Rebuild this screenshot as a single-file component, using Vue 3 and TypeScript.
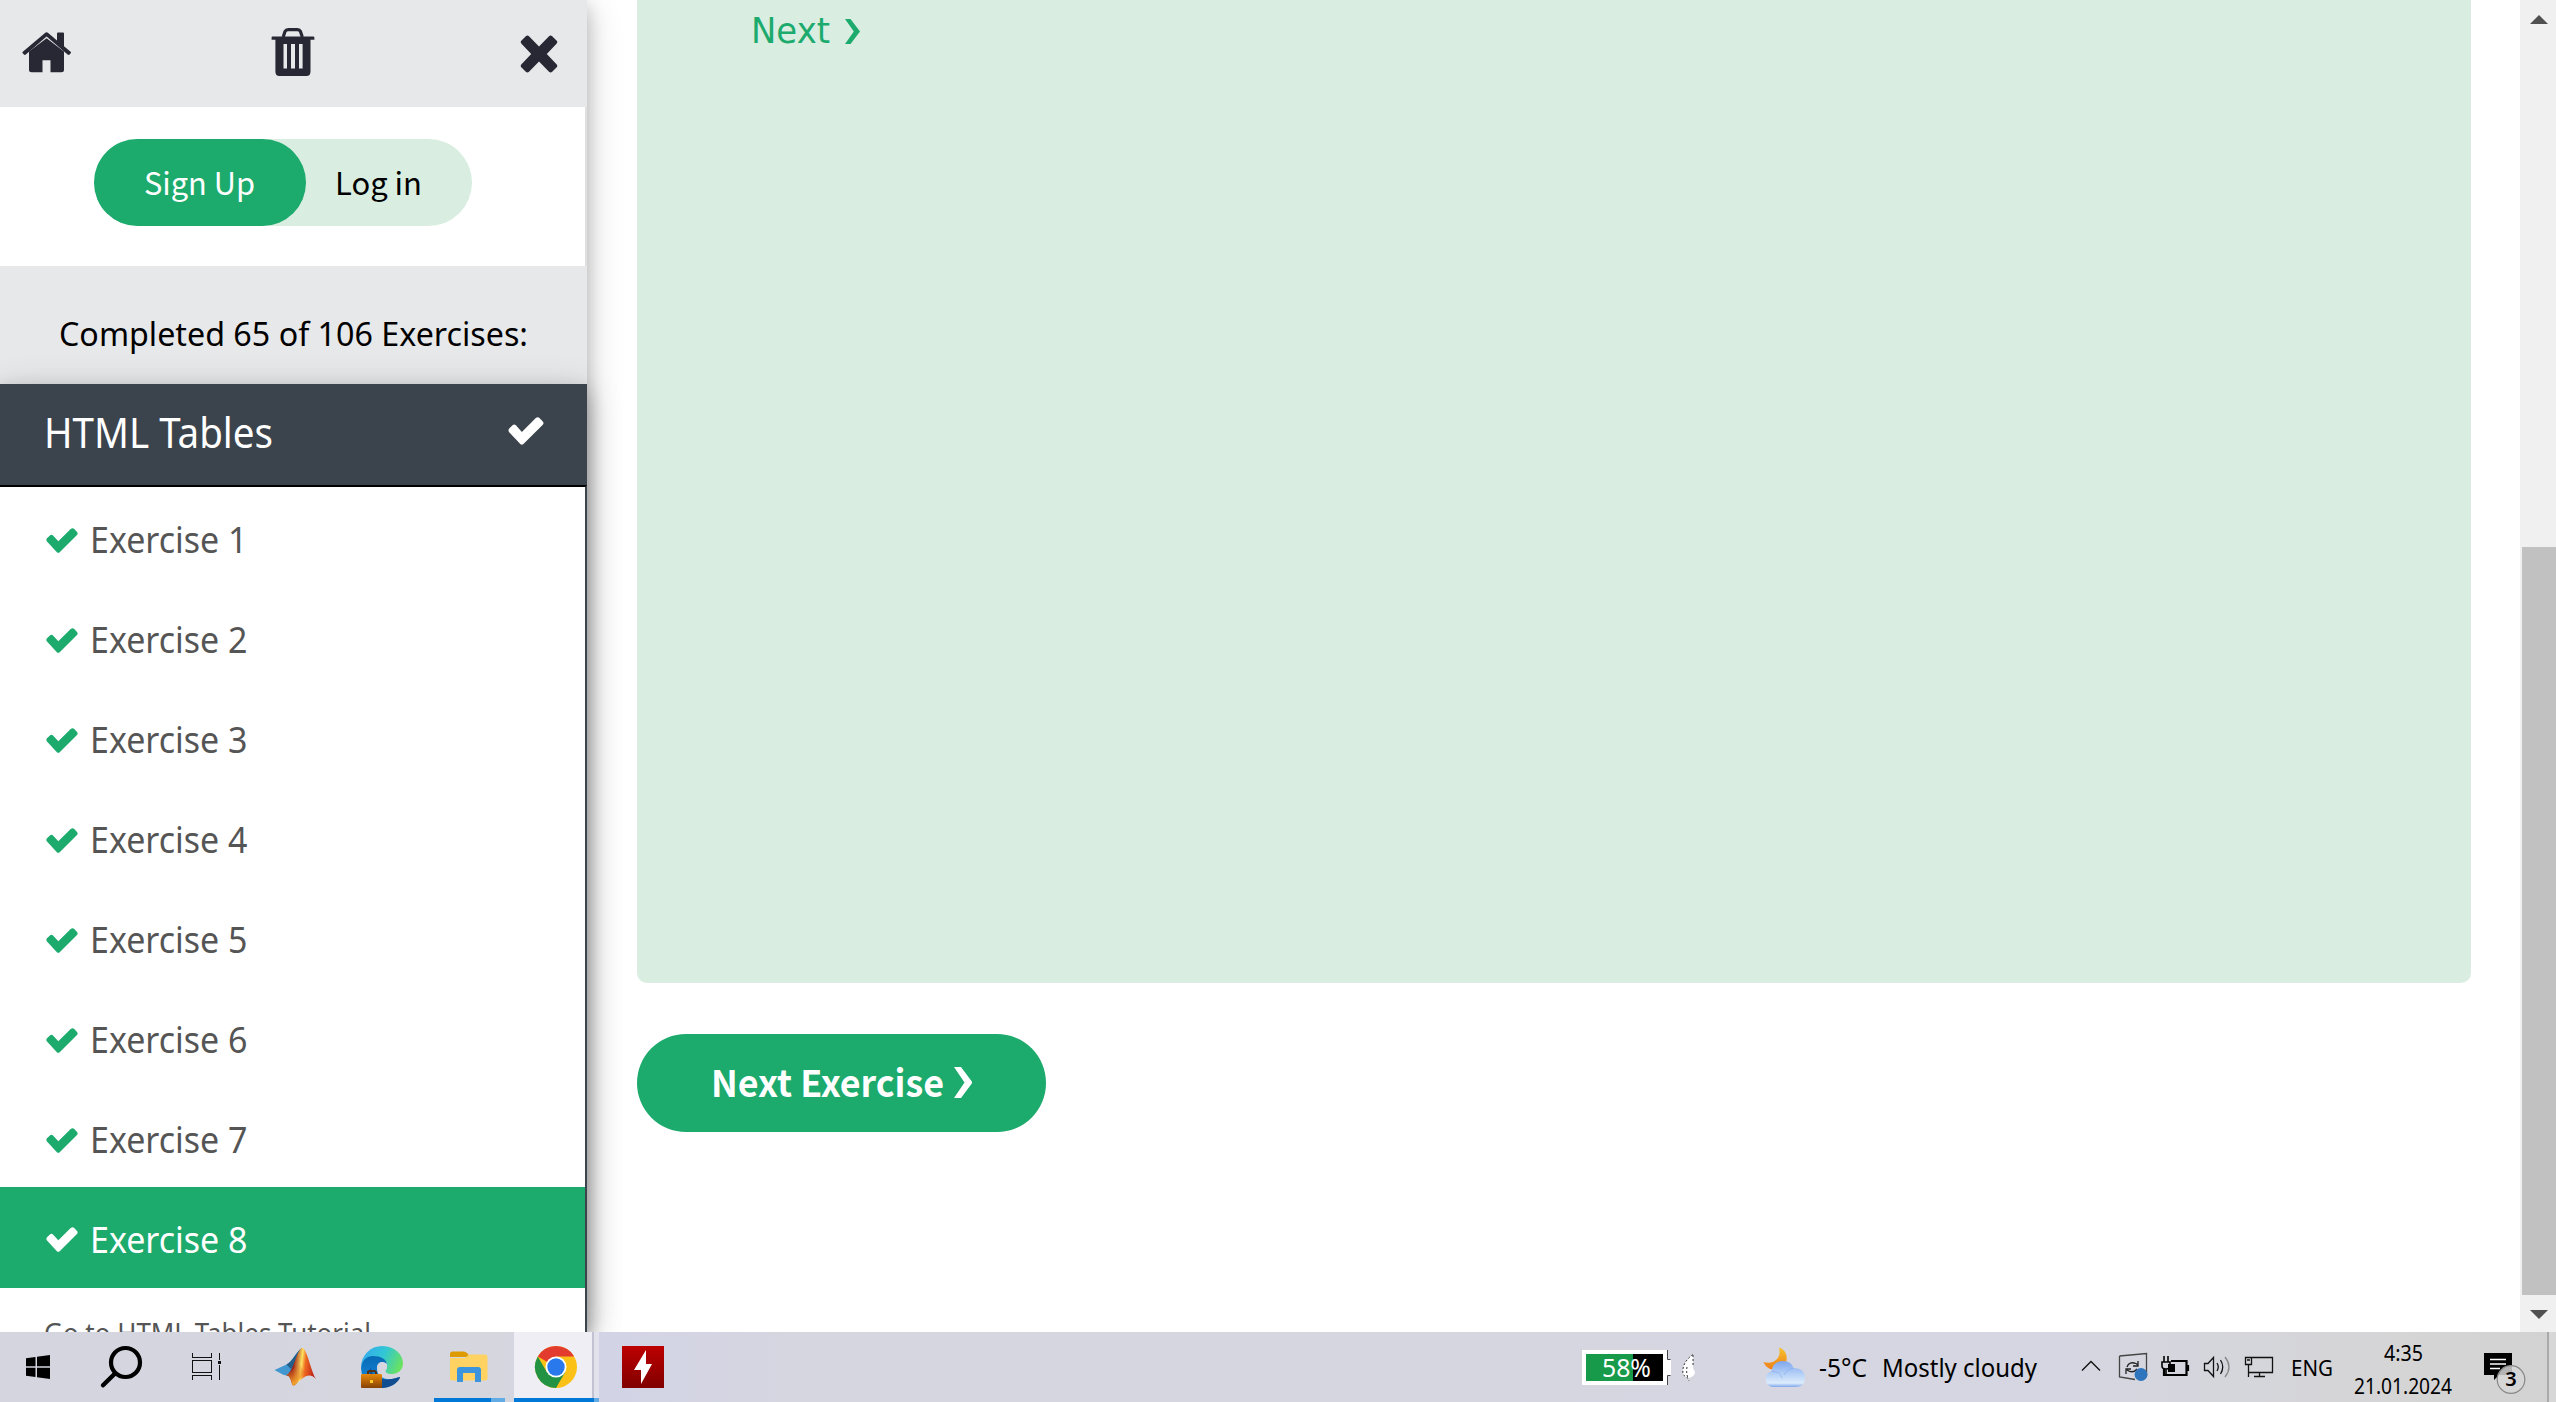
<script setup lang="ts">
import { h, type FunctionalComponent } from 'vue'

interface LabelProps {
  text: string
  size: number
  width: number
  height: number
  base: number
  weight?: number
  font?: string
}

const ui = "'Noto Sans', 'Open Sans', sans-serif"
const source = "'Noto Sans CJK SC', 'Noto Sans', sans-serif"
const dejavu = "'DejaVu Sans', sans-serif"

// One line of text fitted to a fixed advance width.
const Label: FunctionalComponent<LabelProps> = (p) =>
  h('svg', { width: p.width, height: p.height, style: 'display:block;overflow:visible;flex:none' }, [
    h(
      'text',
      {
        x: 0,
        y: p.base,
        fill: 'currentColor',
        'font-size': p.size,
        'font-weight': p.weight ?? 400,
        'font-family': p.font ?? ui,
        textLength: p.width,
        lengthAdjust: 'spacingAndGlyphs',
      },
      p.text,
    ),
  ])
Label.props = ['text', 'size', 'width', 'height', 'base', 'weight', 'font']

const exercises: number[] = [1, 2, 3, 4, 5, 6, 7, 8]
const current = 8
</script>

<template>
  <div class="screen">
    <div class="page">
      <aside class="sidebar">
        <header class="tools">
          <svg class="home" width="50" height="50" viewBox="0 0 50 50">
            <path d="M0.8 21.5 23 1Q24.600 -.4 26.200 1L35 9.200V1.500Q35 .5 36 .5H41Q42 .5 42 1.500V15.500L48.600 21.500Q49.400 22.400 48.700 23.200L47.600 24.500Q46.600 25.300 45.600 24.500L24.600 5 3.800 24.500Q2.800 25.300 1.900 24.500L.8 23.200Q0 22.400 .8 21.500Z" transform="scale(1 .92)" />
            <path d="M24.600 7.500 42 23.800V46.500Q42 49 39.500 49H28.500V34.500H20.500V49H9.500Q7 49 7 46.500V23.800Z" transform="scale(1 .82)" />
          </svg>
          <svg class="trash" width="44" height="50" viewBox="0 0 44 50">
            <path d="M12.200 9 14 3.500Q15 1.600 17.200 1.600H26.500Q28.600 1.600 29.500 3.500L31.300 9" fill="none" stroke="#282834" stroke-width="3.200" />
            <path fill-rule="evenodd" d="M1.300 8.500H42.200Q43.400 8.500 43.400 9.700V11.800H39.500V43.500Q39.500 48 35.400 48H8.500Q4.400 48 4.400 43.500V11.800H.6V9.700Q.6 8.500 1.300 8.500ZM12.500 16V40.500H16V16ZM20 16V40.500H24V16ZM28 16V40.500H31.600V16Z" />
          </svg>
          <svg class="close" width="38" height="38" viewBox="0 0 38 38">
            <path d="M5.800 1.200Q7.400 -.2 9 1.200L19 11.500 29 1.200Q30.600 -.2 32.200 1.200L36.500 5.500Q38.100 7.100 36.500 8.700L26.800 19 36.500 29.300Q38.100 30.900 36.500 32.500L32.200 36.800Q30.600 38.200 29 36.800L19 26.500 9 36.800Q7.400 38.200 5.800 36.800L1.500 32.500Q-.1 30.900 1.500 29.300L11.200 19 1.500 8.700Q-.1 7.100 1.500 5.500Z" />
          </svg>
        </header>

        <section class="auth">
          <div class="pill">
            <div class="signup"><Label text="Sign Up" :size="31.500" :width="111" :height="87" :base="56" :font="source" /></div>
            <div class="login"><Label text="Log in" :size="31.500" :width="87" :height="87" :base="56" :font="source" /></div>
          </div>
        </section>

        <section class="progress">
          <Label text="Completed 65 of 106 Exercises:" :size="33" :width="469" :height="118" :base="80" />
        </section>

        <div class="menu">
          <div class="chapter">
            <Label text="HTML Tables" :size="42" :width="229" :height="101" :base="64" />
            <svg width="36" height="28" viewBox="0 0 32 25"><path d="M1 10.200 4.200 7.200Q5.600 6.300 7 7.400L12.300 13.300 24.700 1Q26.500 -.4 28 .8L31 4Q32.300 5.600 31 7L13.700 24.200Q12.300 25.500 10.900 24.200L1 13.600Q-.3 11.900 1 10.200Z" /></svg>
          </div>

          <nav class="list">
            <a v-for="n in exercises" :key="n" class="item" :class="{ current: n === current }">
              <svg width="32" height="25" viewBox="0 0 32 25"><path d="M1 10.200 4.200 7.200Q5.600 6.300 7 7.400L12.300 13.300 24.700 1Q26.500 -.4 28 .8L31 4Q32.300 5.600 31 7L13.700 24.200Q12.300 25.500 10.900 24.200L1 13.600Q-.3 11.900 1 10.200Z" /></svg>
              <Label :text="'Exercise ' + n" :size="36" :width="157.500" :height="100" :base="65.500" />
            </a>
            <div class="tutorial"><Label text="Go to HTML Tables Tutorial" :size="28" :width="327" :height="44" :base="55" /></div>
          </nav>
        </div>
      </aside>

      <main class="content">
        <div class="panel">
          <Label text="Next" :size="35" :width="79" :height="60" :base="43" :font="dejavu" />
          <svg class="chevron" width="15" height="25" viewBox="0 0 15 25"><path d="M0 0H5.500L15 12.500 5.500 25H0L8.800 12.500Z" /></svg>
        </div>
        <a class="next">
          <Label text="Next Exercise" :size="37" :width="233" :height="98" :base="63" :weight="700" :font="source" />
          <svg class="chevron" width="18" height="31" viewBox="0 0 18 31"><path d="M0 0H7L18.500 15.500 7 31H0L10.500 15.500Z" /></svg>
        </a>
      </main>

      <div class="scrollbar">
        <svg width="18" height="9" viewBox="0 0 18 9"><path d="M0 9 9 0 18 9Z" fill="#505050" /></svg>
        <div class="thumb"></div>
        <svg width="18" height="9" viewBox="0 0 18 9"><path d="M0 0H18L9 9Z" fill="#505050" /></svg>
      </div>
    </div>

    <footer class="taskbar">
      <div class="apps">
        <svg width="76" height="70" viewBox="0 1332 76 70">
          <path d="M26 1358.300 35.500 1357V1366.300H26ZM37 1356.800 50 1355V1366.300H37ZM26 1367.700H35.500V1377L26 1375.700ZM37 1367.700H50V1379L37 1377.200Z" />
        </svg>
        <svg width="88" height="70" viewBox="76 1332 88 70">
          <circle cx="125.500" cy="1362.500" r="14.500" fill="none" stroke="#000" stroke-width="4.200" />
          <path d="M115 1373.500 103 1385.300" stroke="#000" stroke-width="4.400" stroke-linecap="round" />
        </svg>
        <svg width="88" height="70" viewBox="164 1332 88 70" fill="none" stroke="#111" stroke-width="1.200" shape-rendering="crispEdges">
          <path d="M192.500 1353V1357.500H211.500V1353M192.500 1360.500H211.500V1372.500H192.500ZM192.500 1380V1375.500H211.500V1380M219.500 1353V1360M219.500 1365V1380" />
          <rect x="218" y="1361" width="3" height="3" fill="#111" stroke="none" />
        </svg>
        <svg width="88" height="70" viewBox="252 1332 88 70">
          <defs>
            <linearGradient id="mlab" x1="0" x2="1" y1=".1" y2=".25"><stop offset="0" stop-color="#4a1520" /><stop offset=".3" stop-color="#a02818" /><stop offset=".55" stop-color="#ffe060" /><stop offset=".68" stop-color="#ee6a20" /><stop offset="1" stop-color="#bd2018" /></linearGradient>
            <linearGradient id="mlow" y1="0" y2="1" x1="0" x2="0"><stop offset="0" stop-color="#d04a18" stop-opacity="0" /><stop offset="1" stop-color="#ffb52c" /></linearGradient>
          </defs>
          <path d="M274.500 1370 286.500 1364.500C292 1362 296 1352 301 1349L294 1369 286 1375.500C282 1375 279 1372 274.500 1370Z" fill="#4397d1" />
          <path d="M286.500 1364.500C293 1361.500 297 1350.500 302 1348L297 1363 291 1369Z" fill="#245f8c" />
          <path d="M286 1375.500C294 1372 296.500 1348.500 302.500 1348C307 1348.500 311 1372 316 1379C309 1371 302 1378 296 1384.500Q293 1387 292 1384C290.500 1378 289 1375 286 1375.500Z" fill="url(#mlab)" />
          <path d="M286 1375.500C292 1371 295 1367 299 1363L305 1374C300 1377 298 1382 293 1386C291 1380 289 1374 286 1375.500Z" fill="url(#mlow)" />
        </svg>
        <svg width="88" height="70" viewBox="340 1332 88 70">
          <defs>
            <linearGradient id="edgeTop" x1="0" x2="1" y1=".3" y2=".6"><stop offset="0" stop-color="#35abed" /><stop offset=".5" stop-color="#31c6d5" /><stop offset="1" stop-color="#6be35c" /></linearGradient>
            <linearGradient id="edgeLeft" x1="0" x2="0" y1="0" y2="1"><stop offset="0" stop-color="#0869b4" /><stop offset="1" stop-color="#168fe3" /></linearGradient>
            <linearGradient id="bag" x1="0" x2="0" y1="0" y2="1"><stop offset="0" stop-color="#e68a0c" /><stop offset=".5" stop-color="#b86506" /><stop offset="1" stop-color="#854307" /></linearGradient>
          </defs>
          <path d="M361 1367A21 21 0 0 1 382 1346C395 1346 403 1355 403 1363C403 1370 398 1374 392 1374C387 1374 384 1372 386.500 1369C390 1361 380 1356 374 1357C367 1358 363 1362 361 1367Z" fill="url(#edgeTop)" />
          <path d="M361 1368C362 1360 367 1356 373 1356C381 1356 386 1359 387 1364C383 1360 377 1363 377 1369C377 1378 388 1382 399 1377C391 1390 372 1392 364 1379Q361 1374 361 1368Z" fill="url(#edgeLeft)" />
          <path d="M371 1367C370 1377 383 1383 399.500 1377Q400.500 1377 400 1378C394 1388 382 1390 376 1386C370 1382 368 1373 371 1367Z" fill="#114d91" />
          <circle cx="382" cy="1367" r="5" fill="#d5d6e0" />
          <path d="M368 1374V1372Q368 1371 370 1371H374Q376 1371 376 1373V1374" fill="none" stroke="#553019" stroke-width="2" />
          <rect x="361" y="1374" width="21" height="14" rx="1" fill="url(#bag)" />
          <rect x="370" y="1380" width="3" height="3" fill="#ffce25" />
        </svg>
        <svg width="88" height="70" viewBox="428 1332 88 70">
          <path d="M450 1354Q450 1351.500 452 1351.500H464Q466 1351.500 468 1354L470 1357H450Z" fill="#dd9b00" />
          <path d="M450 1358H465L469 1354.500H485.500Q487.500 1354.500 487.500 1357V1378Q487.500 1380.500 485 1380.500H452.500Q450 1380.500 450 1378Z" fill="#ffd262" />
          <path d="M457 1382V1370Q457 1367 460 1367H478Q481 1367 481 1370V1382H475V1373H463V1382Z" fill="#3c95dc" />
          <path d="M434 1398H491V1402H434Z" fill="#0078d7" /><path d="M491 1398H505V1402H491Z" fill="#62abe4" />
        </svg>
        <svg width="84" height="70" viewBox="516 1332 84 70" overflow="visible">
          <path d="M514 1332H592V1402H514Z" fill="#eeeef4" /><path d="M592 1332H594V1402H592Z" fill="#c1c2d2" /><path d="M594 1332H599V1402H594Z" fill="#e2e2ec" />
          <path d="M514 1398H594V1402H514Z" fill="#0078d7" /><path d="M594 1398H599V1402H594Z" fill="#62abe4" />
          <circle cx="556" cy="1367" r="21" fill="#fbc116" />
          <path d="M556 1367 537.800 1356.500A21 21 0 0 1 574.200 1356.500H556Z" fill="#e33b2e" />
          <path d="M537.800 1356.500A21 21 0 0 0 556 1388L565.100 1372.200 556 1367 546.900 1372.200Z" fill="#229342" />
          <circle cx="556" cy="1367" r="10.500" fill="#fff" /><circle cx="556" cy="1367" r="8.700" fill="#2979ec" />
        </svg>
        <svg width="90" height="70" viewBox="600 1332 90 70">
          <defs><linearGradient id="flash" x1="0" x2="0" y1="0" y2="1"><stop offset="0" stop-color="#bd0000" /><stop offset="1" stop-color="#800000" /></linearGradient></defs>
          <rect x="622" y="1346" width="42" height="42" fill="url(#flash)" />
          <path d="M646 1350V1364H652L641 1384V1370H634Z" fill="#fff" />
        </svg>
      </div>

      <div class="tray">
        <div class="battery">
          <div class="charge"><Label text="58%" :size="25" :width="49" :height="28" :base="22.500" /></div>
          <svg width="7" height="35" viewBox="0 0 7 35"><path d="M0 0V35H1V25H4V10H1V0Z" fill="#fff" /><path d="M.5 0V9.500H3.500M.5 35V25.500H3.500" fill="none" stroke="#444" /></svg>
          <svg class="leaf" width="14" height="28" viewBox="0 0 14 28"><path d="M11 .5C3 6 0 13 1 20Q3 23 6 24L7 27V24Q13 22 13 18L11 14Z" fill="#fff" /><path d="M11 .5C3 6 0 13 1 20Q3 23 6 24L7 27M5 13Q4 19 6 24M11 1V12" fill="none" stroke="#333" stroke-dasharray="2 2" /></svg>
        </div>
        <div class="weather">
          <svg width="42" height="41" viewBox="0 0 42 41">
            <defs>
              <linearGradient id="moon" x1="0" x2="0" y1="0" y2="1"><stop offset="0" stop-color="#f5c32c" /><stop offset="1" stop-color="#ef7d17" /></linearGradient>
              <linearGradient id="cloud" x1="0" x2="0" y1="0" y2="1"><stop offset="0" stop-color="#7fa6ee" /><stop offset=".5" stop-color="#b5d0f7" /><stop offset=".85" stop-color="#dcecfb" /><stop offset="1" stop-color="#7fa6ee" /></linearGradient>
            </defs>
            <path d="M16 .5C24 3 26 12 21 19C15 25 4 24 .5 15C10 18 19 12 16 .5Z" fill="url(#moon)" />
            <path d="M9 40A8 8 0 0 1 8.500 24.500Q10 14 20 14Q28 14 30.500 21Q42 21 42 31Q42 40 32 40Z" fill="url(#cloud)" />
            <path d="M8.500 24.500Q17 24 19 31M30.500 21Q24 22 21 28" fill="none" stroke="#84aaee" opacity=".6" />
          </svg>
          <Label text="-5°C" :size="25" :width="48" :height="70" :base="45" />
          <Label text="Mostly cloudy" :size="25" :width="155" :height="70" :base="45" />
        </div>
        <svg width="204" height="70" viewBox="2076 1332 204 70" fill="none" stroke="#111" stroke-width="1.300">
          <path d="M2082 1370.500 2091 1361.500 2100 1370.500" />
          <path d="M2119.500 1356 2146.500 1353.500V1376M2119.500 1356V1377L2135 1379.500" stroke="#444" />
          <path d="M2127 1367Q2129 1361 2136 1363.500L2138 1365M2138 1361V1366H2133M2137 1369Q2133 1374 2127 1370M2126 1374V1369H2131" stroke="#222" />
          <circle cx="2141" cy="1374.500" r="6.500" fill="#2e75be" stroke="none" />
          <path d="M2171 1361H2186.500V1375H2164V1369M2188 1365V1371" stroke="#000" stroke-width="2.200" />
          <path d="M2162 1362H2170V1366Q2170 1369 2166 1369Q2162 1369 2162 1366ZM2164 1356V1362M2168 1356V1362M2166 1369V1376" stroke="#000" stroke-width="1.600" />
          <rect x="2168" y="1364" width="7" height="8" fill="#000" stroke="none" />
          <path d="M2204.500 1363.500H2208L2213.500 1357.500V1376.500L2208 1370.500H2204.500ZM2217 1363Q2219.500 1367 2217 1371M2220.500 1360Q2225 1367 2220.500 1374" />
          <path d="M2225 1357Q2233 1367 2225 1377" stroke="#888" />
          <path d="M2251 1357.500H2272.500V1372.500H2248.500M2245.500 1357.500H2251.500V1364.500H2245.500ZM2248.500 1364.500V1377M2259.500 1372.500V1376.500M2254 1376.500H2265M2247 1360H2250" />
        </svg>
        <div class="lang"><Label text="ENG" :size="21.500" :width="42" :height="70" :base="44" /></div>
        <div class="clock">
          <Label text="4:35" :size="21.500" :width="39" :height="33" :base="27" />
          <Label text="21.01.2024" :size="21.500" :width="98" :height="33" :base="27" />
        </div>
        <svg width="71" height="70" viewBox="2476 1332 71 70">
          <path d="M2484 1353H2512V1375H2499L2494 1380V1375H2484Z" fill="#000" />
          <path d="M2490 1359.500H2506M2490 1364H2506M2490 1368.500H2500" stroke="#fff" stroke-width="1.300" />
          <circle cx="2511" cy="1379.500" r="13.800" fill="#d7d7d8" fill-opacity=".84" stroke="#888" stroke-width="1.200" />
          <text x="2511" y="1386" text-anchor="middle" font-family="Noto Sans, sans-serif" font-size="20" font-weight="600">3</text>
        </svg>
        <div class="peek"></div>
      </div>
    </footer>
  </div>
</template>

<style>
body { margin: 0; overflow: hidden; }
</style>

<style scoped>
.screen { width: 2556px; height: 1402px; display: flex; flex-direction: column; overflow: hidden; background: #fff; color: #000; }
.page { height: 1332px; display: flex; overflow: hidden; }
svg { display: block; flex: none; }
.sidebar { width: 587px; flex: none; height: 1332px; background: #e0e0e1; box-shadow: 0 7px 17px rgba(0,0,0,.2), 0 7px 34px rgba(0,0,0,.19); display: flex; flex-direction: column; }
.tools { height: 107px; flex: none; background: #e7e8ea; display: flex; align-items: flex-start; justify-content: space-between; box-sizing: border-box; padding: 28px 29px 0 22px; fill: #282834; }
.home { margin-top: 4px; }
.trash { margin-right: 7px; }
.close { margin-top: 7px; }
.auth { width: 585px; height: 159px; flex: none; background: #fff; box-sizing: border-box; padding: 32px 0 0 94px; }
.pill { width: 378px; height: 87px; border-radius: 43.5px; background: #d9eee1; display: flex; }
.signup { width: 212px; box-sizing: border-box; padding-left: 50px; border-radius: 43.5px; background: #1caa6d; color: #fff; }
.login { padding-left: 29px; }
.progress { height: 118px; flex: none; background: #e7e8ea; padding-left: 59px; }
.menu { flex: 1; display: flex; flex-direction: column; box-shadow: 0 7px 17px rgba(0,0,0,.2), 0 7px 34px rgba(0,0,0,.19); }
.chapter { height: 101px; flex: none; background: #3b444c; color: #fff; fill: #fff; display: flex; justify-content: space-between; padding: 0 43px 0 43.5px; }
.chapter svg:last-child { margin-top: 33px; }
.list { flex: 1; background: #fff; border-top: 2px solid #000; border-right: 2px solid #3b444c; overflow: hidden; }
.item { height: 100px; display: flex; align-items: center; gap: 12px; padding-left: 46px; color: #555; fill: #1caa6d; }
.item svg:first-child { margin-top: 6px; }
.item.current { height: 101px; align-items: flex-start; background: #1caa6d; color: #fff; fill: #fff; }
.item.current svg:first-child { margin-top: 40px; }
.tutorial { height: 44px; padding-left: 43.5px; color: #555; }
.content { flex: 1; padding-left: 50px; }
.panel { width: 1834px; height: 983px; box-sizing: border-box; border-radius: 0 0 10px 10px; background: #d9eee1; color: #1caa6d; fill: #1caa6d; display: flex; padding-left: 114px; }
.panel .chevron { margin: 19px 0 0 14.5px; }
.next { width: 409px; height: 98px; box-sizing: border-box; margin-top: 51px; padding-left: 74px; border-radius: 49px; background: #1caa6d; color: #fff; fill: #fff; display: flex; }
.next .chevron { margin: 33px 0 0 10px; }
.scrollbar { width: 36px; flex: none; box-sizing: border-box; background: #f0f0f0; padding: 15px 0 13px; display: flex; flex-direction: column; align-items: center; }
.scrollbar svg { margin-left: 2px; }
.thumb { align-self: flex-end; width: 34px; height: 748px; margin: 523px 0 15px; background: #c1c1c1; }
.taskbar { height: 70px; display: flex; justify-content: space-between; background: linear-gradient(90deg, #d4d5df 0, #d6d6df 500px, #d2d3e5 610px, #d6d6e0 800px, #d5d6e1 2060px, #d5d5d6 2400px, #d2d2d2 2556px); }
.apps, .tray, .weather, .battery { display: flex; }
.tray { width: 974px; align-items: center; }
.battery { width: 181px; flex: none; height: 35px; }
.charge { width: 85px; height: 35px; box-sizing: border-box; border: 4px solid #fff; padding-left: 16px; color: #fff; background: linear-gradient(90deg, #189a4b 47px, #000 47px) padding-box; }
.leaf { margin: 4px 0 0 8px; }
.weather { width: 313px; flex: none; align-items: center; }
.weather > :nth-child(2) { margin-left: 14px; }
.weather > :nth-child(3) { margin-left: 15px; }
.lang { width: 65px; flex: none; box-sizing: border-box; padding-left: 10.5px; }
.clock { width: 116px; height: 66px; flex: none; display: flex; flex-direction: column; align-items: center; margin-right: 15px; }
.peek { height: 70px; flex: 1; box-sizing: border-box; border-left: 2px solid #aaa; background: #d7d7d7; }
</style>
